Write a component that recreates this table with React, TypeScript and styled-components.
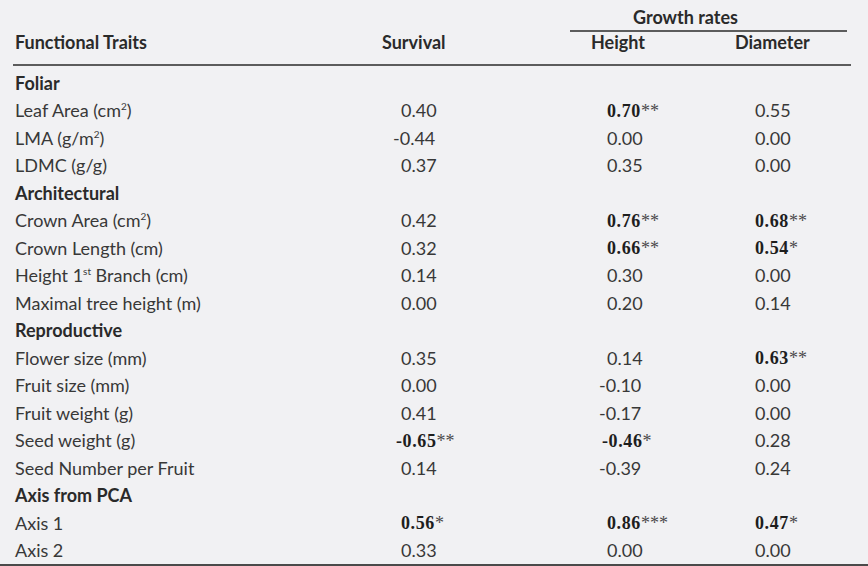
import React from 'react'
import styled, { createGlobalStyle } from 'styled-components'

const GlobalStyle = createGlobalStyle`
    html, body {
        margin: 0;
        padding: 0;
        background: #f1f1f3;
    }
    body {
        font-family: Lato, "Open Sans", sans-serif;
        color: #383838;
    }
`

type Cell = { v: string, bold?: boolean, stars?: string }
type Row =
    | { kind: 'group', label: string }
    | { kind: 'trait', label: React.ReactNode, values: Cell[] }

const c = (v: string, stars?: string): Cell => ({ v, bold: !!stars, stars })

const rows: Row[] = [
    { kind: 'group', label: 'Foliar' },
    { kind: 'trait', label: <>Leaf Area (cm<Sup>2</Sup>)</>, values: [c('0.40'), c('0.70', '**'), c('0.55')] },
    { kind: 'trait', label: <>LMA (g/m<Sup>2</Sup>)</>, values: [c('-0.44'), c('0.00'), c('0.00')] },
    { kind: 'trait', label: 'LDMC (g/g)', values: [c('0.37'), c('0.35'), c('0.00')] },
    { kind: 'group', label: 'Architectural' },
    { kind: 'trait', label: <>Crown Area (cm<Sup>2</Sup>)</>, values: [c('0.42'), c('0.76', '**'), c('0.68', '**')] },
    { kind: 'trait', label: 'Crown Length (cm)', values: [c('0.32'), c('0.66', '**'), c('0.54', '*')] },
    { kind: 'trait', label: <>Height 1<Sup>st</Sup> Branch (cm)</>, values: [c('0.14'), c('0.30'), c('0.00')] },
    { kind: 'trait', label: 'Maximal tree height (m)', values: [c('0.00'), c('0.20'), c('0.14')] },
    { kind: 'group', label: 'Reproductive' },
    { kind: 'trait', label: 'Flower size (mm)', values: [c('0.35'), c('0.14'), c('0.63', '**')] },
    { kind: 'trait', label: 'Fruit size (mm)', values: [c('0.00'), c('-0.10'), c('0.00')] },
    { kind: 'trait', label: 'Fruit weight (g)', values: [c('0.41'), c('-0.17'), c('0.00')] },
    { kind: 'trait', label: 'Seed weight (g)', values: [c('-0.65', '**'), c('-0.46', '*'), c('0.28')] },
    { kind: 'trait', label: 'Seed Number per Fruit', values: [c('0.14'), c('-0.39'), c('0.24')] },
    { kind: 'group', label: 'Axis from PCA' },
    { kind: 'trait', label: 'Axis 1', values: [c('0.56', '*'), c('0.86', '***'), c('0.47', '*')] },
    { kind: 'trait', label: 'Axis 2', values: [c('0.33'), c('0.00'), c('0.00')] },
]

function Sup({ children }: { children: React.ReactNode }) {
    return <SupText>{children}</SupText>
}

const SupText = styled.sup`
    font-size: 10px;
    line-height: 0;
    vertical-align: 7px;
`

const Sheet = styled.div`
    width: 868px;
    font-size: 18px;
`

const Head = styled.div`
    margin: 0 17px 0 13px;
`

const Spanner = styled.div`
    margin-left: 557px;
    width: 277px;
    height: 32px;
    padding: 4px 0 0 63px;
    box-sizing: border-box;
    line-height: 26px;
    font-weight: 700;
    color: #2a2a2a;
    border-bottom: 2px solid #5c5c5c;
`

const Columns = styled.div`
    display: grid;
    grid-template-columns: 380px 206px 148px 104px;
    align-items: center;
`

const HeadRow = styled(Columns)`
    height: 34px;
    box-sizing: border-box;
    border-bottom: 2px solid #5c5c5c;
    align-items: start;
    line-height: 20px;
    font-weight: 700;
    color: #2a2a2a;
`

const HeadCell = styled.div<{ $shift: number }>`
    margin-left: ${p => p.$shift}px;
`

const Body = styled.div`
    padding-top: 3px;
    border-bottom: 2px solid #4a4a4a;
`

const BodyRow = styled(Columns)`
    height: 27.5px;
    padding-left: 13px;
    line-height: 20px;
`

const Label = styled.div<{ $group?: boolean }>`
    padding-left: 2px;
    font-weight: ${p => (p.$group ? 700 : 400)};
    color: ${p => (p.$group ? '#2a2a2a' : '#383838')};
    white-space: nowrap;
`

const Value = styled.div<{ $hang: number }>`
    padding-left: 8px;
    margin-left: ${p => -p.$hang}px;
    white-space: nowrap;
`

const Strong = styled.span`
    font-family: "Liberation Serif", "Times New Roman", serif;
    font-weight: 700;
    font-size: 18px;
    letter-spacing: 0.6px;
    color: #1e1e1e;
`

const Stars = styled.span`
    font-family: "Liberation Serif", "Times New Roman", serif;
    font-size: 18px;
    color: #4a4a4a;
`

function ValueCell({ cell }: { cell: Cell }) {
    const negative = cell.v.startsWith('-')
    const hang = negative ? (cell.bold ? 5 : 8) : 0
    return (
        <Value $hang={hang}>
            {cell.bold ? <Strong>{cell.v}</Strong> : cell.v}
            {cell.stars && <Stars>{cell.stars}</Stars>}
        </Value>
    )
}

export default function App() {
    return (
        <Sheet>
            <GlobalStyle />
            <Head>
                <Spanner>Growth rates</Spanner>
                <HeadRow>
                    <HeadCell $shift={2}>Functional Traits</HeadCell>
                    <HeadCell $shift={-11}>Survival</HeadCell>
                    <HeadCell $shift={-8}>Height</HeadCell>
                    <HeadCell $shift={-12}>Diameter</HeadCell>
                </HeadRow>
            </Head>
            <Body>
                {rows.map((row, i) =>
                    row.kind === 'group' ? (
                        <BodyRow key={i}>
                            <Label $group>{row.label}</Label>
                        </BodyRow>
                    ) : (
                        <BodyRow key={i}>
                            <Label>{row.label}</Label>
                            {row.values.map((cell, j) => <ValueCell key={j} cell={cell} />)}
                        </BodyRow>
                    )
                )}
            </Body>
        </Sheet>
    )
}
